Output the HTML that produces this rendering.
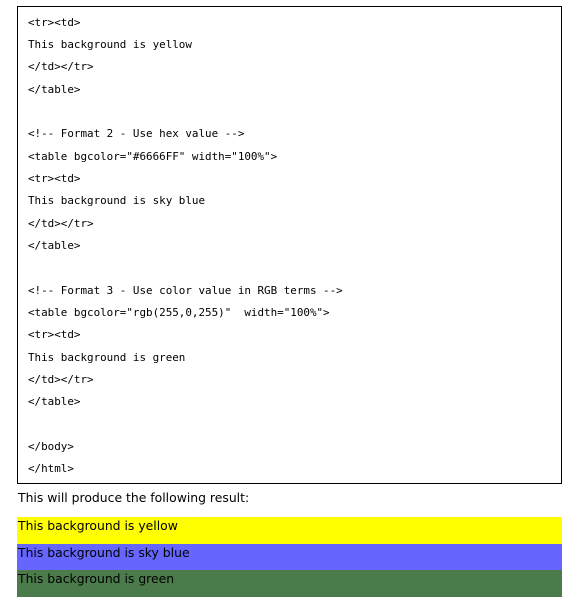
<!DOCTYPE html>
<html><head><style>
body{margin:0;background:#fff;width:568px;height:610px;overflow:hidden;font-family:"DejaVu Sans",Verdana,sans-serif;}
.box{position:absolute;left:17px;top:6px;width:543px;height:476px;border:1px solid #000;}
.code{position:absolute;left:10px;top:4.5px;margin:0;font-family:"DejaVu Sans Mono",monospace;font-size:10.9px;line-height:22.35px;color:#000;white-space:pre;}
.p{position:absolute;left:18px;top:490px;font-size:12.4px;color:#000;}
.bar{position:absolute;left:17px;width:545px;font-size:12.4px;line-height:17px;color:#000;padding-left:1px;box-sizing:border-box;}
</style></head><body>
<div class="box"><pre class="code">&lt;tr&gt;&lt;td&gt;
This background is yellow
&lt;/td&gt;&lt;/tr&gt;
&lt;/table&gt;

&lt;!-- Format 2 - Use hex value --&gt;
&lt;table bgcolor="#6666FF" width="100%"&gt;
&lt;tr&gt;&lt;td&gt;
This background is sky blue
&lt;/td&gt;&lt;/tr&gt;
&lt;/table&gt;

&lt;!-- Format 3 - Use color value in RGB terms --&gt;
&lt;table bgcolor="rgb(255,0,255)"  width="100%"&gt;
&lt;tr&gt;&lt;td&gt;
This background is green
&lt;/td&gt;&lt;/tr&gt;
&lt;/table&gt;

&lt;/body&gt;
&lt;/html&gt;</pre></div>
<div class="p">This will produce the following result:</div>
<div class="bar" style="top:517px;height:27px;background:#ffff00">This background is yellow</div>
<div class="bar" style="top:544px;height:26px;background:#6666ff">This background is sky blue</div>
<div class="bar" style="top:570px;height:27px;background:#4b7b4b">This background is green</div>
</body></html>
